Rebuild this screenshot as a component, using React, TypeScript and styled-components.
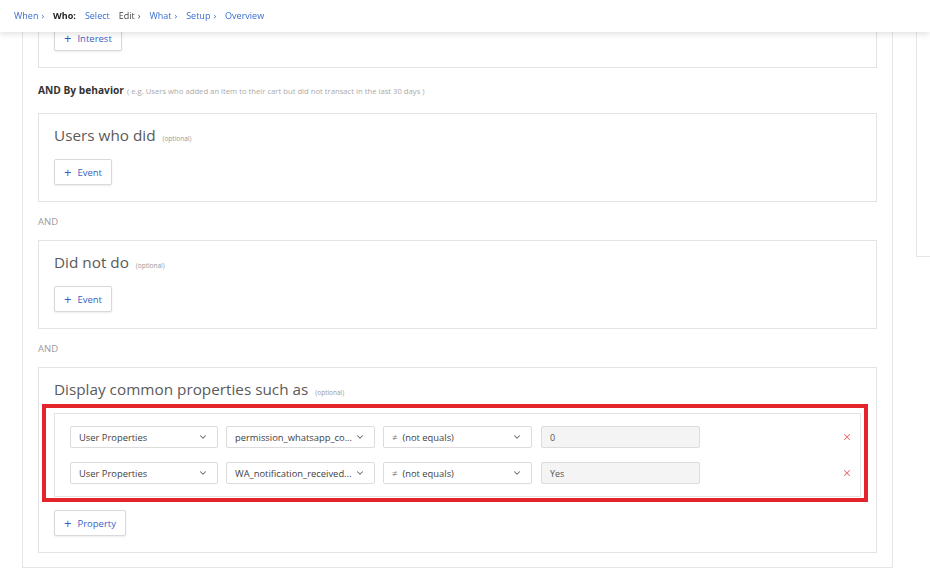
import styled, { createGlobalStyle } from 'styled-components'
import { ChevronDown, X } from 'lucide-react'

const GlobalStyle = createGlobalStyle`
  html, body {
    margin: 0;
    padding: 0;
    background: #fff;
    font-family: "Open Sans", Lato, "Liberation Sans", sans-serif;
    overflow: hidden;
  }
`

const TopBar = styled.nav`
  position: fixed;
  top: 0;
  left: 0;
  right: 0;
  height: 32px;
  background: #fff;
  box-shadow: 0 2px 6px rgba(0, 0, 0, 0.12);
  display: flex;
  align-items: center;
  padding-left: 14px;
  gap: 9px;
  font-size: 9px;
  z-index: 10;
`

const Crumb = styled.span<{ $tone?: 'link' | 'bold' | 'plain' }>`
  color: ${p => (p.$tone === 'bold' ? '#222' : p.$tone === 'plain' ? '#444' : '#3a6cd0')};
  font-weight: ${p => (p.$tone === 'bold' ? 700 : 400)};
  line-height: 12px;
  white-space: nowrap;
  i {
    font-style: normal;
    margin-left: 3px;
  }
`

const Page = styled.div`
  display: flex;
  align-items: flex-start;
  padding-left: 22px;
  gap: 23px;
`

const Main = styled.main`
  width: 871px;
  box-sizing: border-box;
  margin-top: -3px;
  border: 1px solid #e6e6e6;
  padding: 16px 15px 14px;
`

const SidePanel = styled.aside`
  flex: 1;
  height: 257px;
  box-sizing: border-box;
  border-left: 1px solid #e6e6e6;
  border-bottom: 1px solid #e6e6e6;
`

const Card = styled.section`
  position: relative;
  border: 1px solid #e3e3e3;
  padding: 10px 15px 16px;
`

const CardTitle = styled.h3`
  margin: 0 0 13px;
  font-size: 15.3px;
  line-height: 22px;
  font-weight: 400;
  color: #5a5a5a;
  small {
    font-size: 6.5px;
    line-height: 0;
    color: #999;
    margin-left: 3px;
  }
`

const Label = styled.div<{ $top: number; $bottom: number }>`
  margin: ${p => p.$top}px 0 ${p => p.$bottom}px;
  font-size: 9.5px;
  line-height: 14px;
  color: #9a9a9a;
  b {
    color: #333;
    font-weight: 700;
    font-size: 10.2px;
  }
  small {
    font-size: 7.7px;
    line-height: 0;
    color: #aaa;
    margin-left: 3px;
  }
`

const AddButton = styled.button`
  display: flex;
  width: fit-content;
  align-items: center;
  gap: 6px;
  height: 26px;
  padding: 0 9px;
  background: #fff;
  border: 1px solid #d9d9d9;
  border-radius: 2px;
  box-shadow: 0 1px 2px rgba(0, 0, 0, 0.08);
  color: #3a5fc6;
  font-family: inherit;
  font-size: 9.5px;
  span {
    font-size: 13px;
    line-height: 1;
  }
`

const PropertyList = styled.div`
  border: 1px solid #e3e3e3;
  padding: 12px 15px 12px;
  margin-bottom: 13px;
  display: flex;
  flex-direction: column;
  gap: 14px;
`

const Row = styled.div`
  display: flex;
  align-items: center;
  gap: 8px;
`

const Select = styled.div<{ $w: number }>`
  width: ${p => p.$w}px;
  height: 22px;
  box-sizing: border-box;
  border: 1px solid #dcdcdc;
  border-radius: 2px;
  background: #fff;
  display: flex;
  align-items: center;
  justify-content: space-between;
  padding: 0 9px 0 8px;
  font-size: 9.4px;
  color: #3f3f3f;
  white-space: nowrap;
  overflow: hidden;
  svg {
    color: #666;
    flex-shrink: 0;
  }
`

const NotEq = styled.span`
  color: #888;
  margin-right: 5px;
`

const ValueInput = styled.div`
  width: 159px;
  height: 22px;
  box-sizing: border-box;
  border: 1px solid #dcdcdc;
  border-radius: 2px;
  background: #f4f4f4;
  display: flex;
  align-items: center;
  padding-left: 8px;
  font-size: 9px;
  color: #555;
  margin-left: 1px;
`

const Remove = styled.span`
  margin-left: auto;
  margin-right: -7px;
  display: flex;
  color: #e86a6a;
`

const Highlight = styled.div`
  position: absolute;
  left: 3px;
  top: 36px;
  width: 826px;
  height: 98px;
  box-sizing: border-box;
  border: 4px solid #e3242b;
  pointer-events: none;
`

const rows = [
  { prop: 'permission_whatsapp_co...', value: '0' },
  { prop: 'WA_notification_received...', value: 'Yes' },
]

const App = () => {
  return (
    <>
      <GlobalStyle />
      <TopBar>
        <Crumb>When<i>›</i></Crumb>
        <Crumb $tone="bold">Who:</Crumb>
        <Crumb>Select</Crumb>
        <Crumb $tone="plain">Edit<i>›</i></Crumb>
        <Crumb>What<i>›</i></Crumb>
        <Crumb>Setup<i>›</i></Crumb>
        <Crumb>Overview</Crumb>
      </TopBar>
      <Page>
        <Main>
          <Card>
            <AddButton>
              <span>+</span> Interest
            </AddButton>
          </Card>

          <Label $top={15} $bottom={15}>
            <b>AND By behavior</b>
            <small>( e.g. Users who added an item to their cart but did not transact in the last 30 days )</small>
          </Label>

          <Card>
            <CardTitle>
              Users who did <small>(optional)</small>
            </CardTitle>
            <AddButton>
              <span>+</span> Event
            </AddButton>
          </Card>

          <Label $top={13} $bottom={11}>AND</Label>

          <Card>
            <CardTitle>
              Did not do <small>(optional)</small>
            </CardTitle>
            <AddButton>
              <span>+</span> Event
            </AddButton>
          </Card>

          <Label $top={13} $bottom={11}>AND</Label>

          <Card>
            <CardTitle>
              Display common properties such as <small>(optional)</small>
            </CardTitle>
            <PropertyList>
              {rows.map(r => (
                <Row key={r.prop}>
                  <Select $w={148}>
                    User Properties <ChevronDown size={10} strokeWidth={2.5} />
                  </Select>
                  <Select $w={149}>
                    {r.prop} <ChevronDown size={10} strokeWidth={2.5} />
                  </Select>
                  <Select $w={149}>
                    <span>
                      <NotEq>≠</NotEq>(not equals)
                    </span>
                    <ChevronDown size={10} strokeWidth={2.5} />
                  </Select>
                  <ValueInput>{r.value}</ValueInput>
                  <Remove>
                    <X size={10} strokeWidth={2.5} />
                  </Remove>
                </Row>
              ))}
            </PropertyList>
            <AddButton>
              <span>+</span> Property
            </AddButton>
            <Highlight />
          </Card>
        </Main>
        <SidePanel />
      </Page>
    </>
  )
}

export default App
